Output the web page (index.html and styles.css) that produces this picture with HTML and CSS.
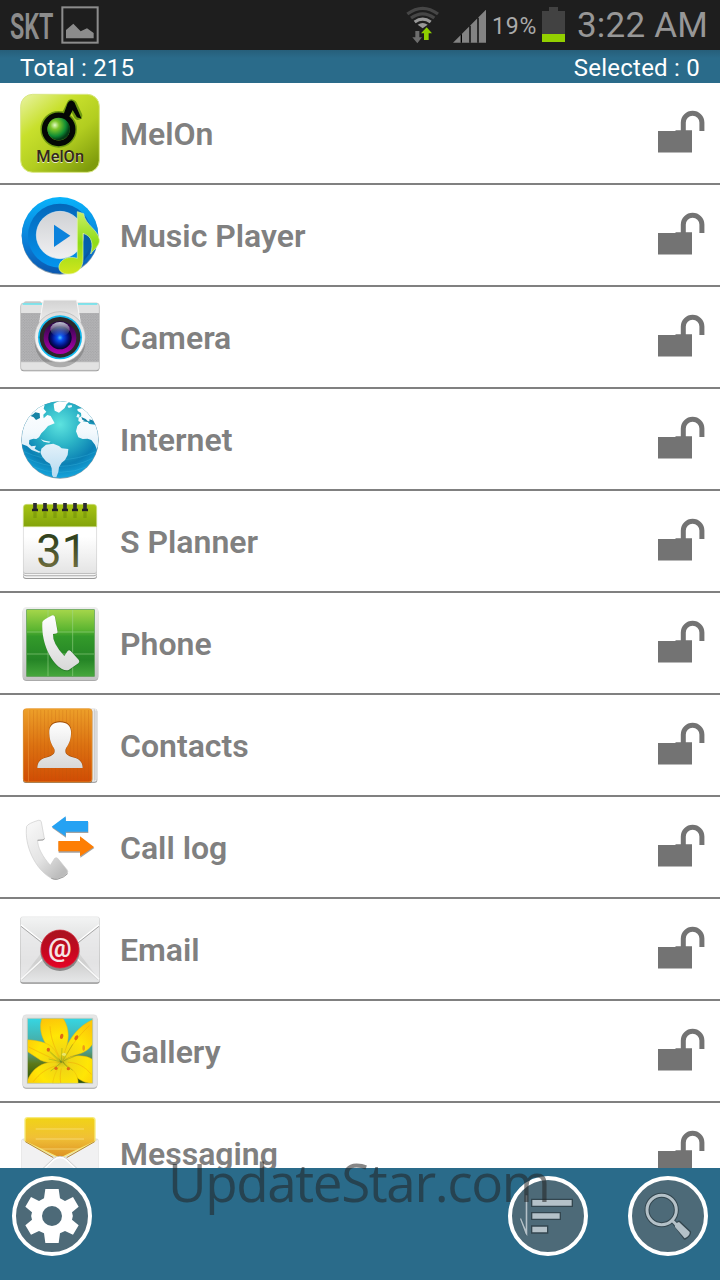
FILE: index.html
```html
<!DOCTYPE html>
<html lang="en">
<head>
    <meta charset="UTF-8">
    <meta name="viewport" content="width=device-width, initial-scale=1.0">
    <title>App Lock</title>
    <link rel="stylesheet" href="styles.css">
</head>
<body>
    <!-- Shared symbols -->
    <svg class="defs" width="0" height="0">
        <symbol id="lock" viewBox="0 0 48 44">
            <path d="M26.3 22V12.5a9.3 9.3 0 0 1 18.6 0V21" fill="none" stroke="#737373" stroke-width="5"/>
            <path d="M1 21h17.5v-.7H35V42.5H1z" fill="#737373"/>
        </symbol>
    </svg>

    <div class="screen">
        <div class="status-bar">
            <span class="carrier">SKT</span>
            <svg class="picture-icon" viewBox="183 18 114 114">
                <rect x="187" y="22" width="106" height="106" fill="none" stroke="#8c8c8c" stroke-width="6"/>
                <path d="M198 115V90l22-19 22 23 19-9 20 14v16z" fill="#8c8c8c"/>
            </svg>
            <svg class="wifi-icon" viewBox="137 18 102 114">
                <g fill="none" stroke-width="10">
                    <path d="M141 42q46-34 92 0" stroke="#464646"/>
                    <path d="M152 54q35-25 70 0" stroke="#464646"/>
                    <path d="M163 66q24-17 48 0" stroke="#999"/>
                </g>
                <path d="M172 74q15-10 30 0l-15 11z" fill="#999"/>
                <path d="M165 93h12v19h8l-14 18-15-18h9z" fill="#6d6d6d"/>
                <path d="M199 82l16 18h-10v20h-14v-20h-9z" fill="#8fd000"/>
            </svg>
            <svg class="signal-icon" viewBox="279 28 99 99">
                <path d="M279 126l99-99v99z" fill="#838383"/>
                <path d="M304 101v25M330 75v51M354 51v75" stroke="#000" stroke-width="4"/>
            </svg>
            <span class="percent">19%</span>
            <svg class="battery-icon" viewBox="546 21 69 105">
                <path d="M567 21h27v12h21v93h-69V33h21z" fill="#424242"/>
                <path d="M546 102h69v24h-69z" fill="#93d000"/>
            </svg>
            <span class="clock">3:22 AM</span>
        </div>

        <div class="summary">
            <span>Total : 215</span>
            <span>Selected : 0</span>
        </div>

        <ul class="app-list">
            <li class="app">
                <svg class="app-icon" viewBox="60 27 240 240">
                    <defs>
                        <linearGradient id="melBg" x1="0" y1="0" x2=".8" y2="1">
                            <stop offset="0" stop-color="#e9f3a4"/>
                            <stop offset=".35" stop-color="#c8e02c"/>
                            <stop offset=".65" stop-color="#b2cd20"/>
                            <stop offset="1" stop-color="#7f9c0c"/>
                        </linearGradient>
                        <radialGradient id="melBall" cx=".33" cy=".33" r=".65">
                            <stop offset="0" stop-color="#e4fbc4"/>
                            <stop offset=".3" stop-color="#7dc52a"/>
                            <stop offset=".75" stop-color="#0e8b33"/>
                            <stop offset="1" stop-color="#043d17"/>
                        </radialGradient>
                    </defs>
                    <rect x="62" y="31" width="236" height="234" rx="36" fill="url(#melBg)" stroke="#d9e783" stroke-width="3"/>
                    <g fill="none" stroke="#6f9a10" stroke-width="26" stroke-linecap="round" stroke-linejoin="round">
                        <circle cx="176" cy="136" r="42"/>
                        <path d="M197 94l17-35 4 2 16 34"/>
                    </g>
                    <circle cx="176" cy="136" r="42" fill="none" stroke="#050805" stroke-width="17"/>
                    <path d="M191 96l14-38q8-12 17-1l19 44-9-3-14-24-16 30z" fill="#050805" stroke="#050805" stroke-width="4"/>
                    <circle cx="176" cy="135" r="34" fill="url(#melBall)"/>
                    <text x="109" y="238" class="melon-text melon-glow" textLength="143" lengthAdjust="spacingAndGlyphs">MelOn</text>
                    <text x="109" y="235" class="melon-text" textLength="143" lengthAdjust="spacingAndGlyphs">MelOn</text>
                </svg>
                <span class="app-name">MelOn</span>
                <svg class="lock"><use href="#lock"/></svg>
            </li>
            <li class="app">
                <svg class="app-icon" viewBox="60 333 240 240">
                    <defs>
                        <linearGradient id="musOut" x1="0" y1="0" x2="0" y2="1">
                            <stop offset="0" stop-color="#08b3fb"/>
                            <stop offset=".6" stop-color="#0b7dd6"/>
                            <stop offset="1" stop-color="#0b57ae"/>
                        </linearGradient>
                        <linearGradient id="musIn" x1="0" y1="0" x2="0" y2="1">
                            <stop offset="0" stop-color="#0467ba"/>
                            <stop offset="1" stop-color="#0494ed"/>
                        </linearGradient>
                        <linearGradient id="musDisc" x1="0" y1="0" x2="0" y2="1">
                            <stop offset="0" stop-color="#cfd1d4"/>
                            <stop offset="1" stop-color="#f0f0f2"/>
                        </linearGradient>
                        <linearGradient id="musNote" x1="0" y1="0" x2="0" y2="1">
                            <stop offset="0" stop-color="#c9ef62"/>
                            <stop offset=".5" stop-color="#8fdc18"/>
                            <stop offset="1" stop-color="#d2e51c"/>
                        </linearGradient>
                    </defs>
                    <circle cx="180" cy="457" r="115" fill="#8aa0b0"/>
                    <circle cx="180" cy="454" r="115" fill="url(#musOut)"/>
                    <circle cx="180" cy="455" r="96" fill="url(#musIn)"/>
                    <circle cx="180" cy="453" r="71" fill="url(#musDisc)" stroke="#e9edf2" stroke-width="2"/>
                    <path d="M162 422l49 33-49 34z" fill="#0b82dc"/>
                    <path d="M250 448c28 8 28 35 18 62l-18 22z" fill="#064a8c" opacity=".6"/>
                    <path d="M232 383l19 6c4 34 43 47 47 78 2 18-16 28-26 43 9-31 4-54-23-62v77c0 30-20 46-45 45-32-1-34-28-15-42 13-10 29-9 43-5z" fill="url(#musNote)" stroke="#e2f6a0" stroke-width="2"/>
                </svg>
                <span class="app-name">Music Player</span>
                <svg class="lock"><use href="#lock"/></svg>
            </li>
            <li class="app">
                <svg class="app-icon" viewBox="60 27 240 240">
                    <defs>
                        <pattern id="camDots" width="8" height="8" patternUnits="userSpaceOnUse">
                            <rect width="8" height="8" fill="#b4b4b6"/>
                            <circle cx="2" cy="2" r="1.5" fill="#969698"/>
                            <circle cx="6" cy="6" r="1.5" fill="#969698"/>
                        </pattern>
                        <linearGradient id="camTop" x1="0" y1="0" x2="0" y2="1">
                            <stop offset="0" stop-color="#d2d2d2"/>
                            <stop offset="1" stop-color="#f5f5f5"/>
                        </linearGradient>
                        <linearGradient id="camRing" x1="0" y1="0" x2="0" y2="1">
                            <stop offset="0" stop-color="#dcdcdc"/>
                            <stop offset="1" stop-color="#fff"/>
                        </linearGradient>
                        <linearGradient id="camPurple" x1="0" y1="0" x2="0" y2="1">
                            <stop offset="0" stop-color="#260540"/>
                            <stop offset="1" stop-color="#b000b0"/>
                        </linearGradient>
                        <radialGradient id="camBlue">
                            <stop offset="0" stop-color="#4ac4ff"/>
                            <stop offset=".25" stop-color="#0a50f0"/>
                            <stop offset=".7" stop-color="#03107e"/>
                            <stop offset="1" stop-color="#030326"/>
                        </radialGradient>
                        <linearGradient id="camShine" x1="0" y1="0" x2="0" y2="1">
                            <stop offset="0" stop-color="#d4dde4" stop-opacity=".9"/>
                            <stop offset="1" stop-color="#8098b0" stop-opacity="0"/>
                        </linearGradient>
                    </defs>
                    <rect x="72" y="40" width="52" height="16" rx="5" fill="#c9cccc"/>
                    <rect x="62" y="48" width="236" height="202" rx="9" fill="#8f8f8f"/>
                    <rect x="62" y="45" width="236" height="202" rx="9" fill="#e2e2e2" stroke="#bdbdbd" stroke-width="2"/>
                    <path d="M68 48h58M234 48h58" stroke="#66e4ee" stroke-width="5"/>
                    <rect x="63" y="75" width="234" height="147" fill="url(#camDots)"/>
                    <path d="M63 222h234" stroke="#c8c8c8" stroke-width="2"/>
                    <path d="M130 36h100l14 85H116z" fill="url(#camTop)" stroke="#f8f8f8" stroke-width="3"/>
                    <circle cx="180" cy="162" r="76" fill="#606060" opacity=".4"/>
                    <circle cx="180" cy="147" r="76" fill="url(#camRing)" stroke="#b4b4b4" stroke-width="2"/>
                    <circle cx="180" cy="148" r="66" fill="#12b9ee"/>
                    <circle cx="180" cy="148" r="61" fill="#2c2729"/>
                    <circle cx="180" cy="149" r="49" fill="url(#camPurple)"/>
                    <circle cx="180" cy="149" r="35" fill="url(#camBlue)"/>
                    <ellipse cx="180" cy="124" rx="29" ry="22" fill="url(#camShine)"/>
                </svg>
                <span class="app-name">Camera</span>
                <svg class="lock"><use href="#lock"/></svg>
            </li>
            <li class="app">
                <svg class="app-icon" viewBox="60 333 240 240">
                    <defs>
                        <radialGradient id="sea" cx=".5" cy=".3" r=".7">
                            <stop offset="0" stop-color="#5de3df"/>
                            <stop offset=".4" stop-color="#2bb3c6"/>
                            <stop offset=".75" stop-color="#0b80b4"/>
                            <stop offset="1" stop-color="#14a4dc"/>
                        </radialGradient>
                        <linearGradient id="land" gradientUnits="userSpaceOnUse" x1="0" y1="340" x2="0" y2="570">
                            <stop offset="0" stop-color="#fff"/>
                            <stop offset=".4" stop-color="#f3f9fd"/>
                            <stop offset="1" stop-color="#b4daf0"/>
                        </linearGradient>
                        <clipPath id="globeClip"><circle cx="180" cy="455" r="115"/></clipPath>
                    </defs>
                    <circle cx="180" cy="456" r="116" fill="#7f9dac"/>
                    <circle cx="180" cy="455" r="115" fill="url(#sea)"/>
                    <g clip-path="url(#globeClip)">
                        <path d="M70 490q110 50 220 0M80 510q100 50 200 0M95 535q85 36 170 0" fill="none" stroke="#4cc7ea" stroke-width="3" opacity=".25"/>
                        <g fill="url(#land)">
                            <path d="M60 466l6-60 22-34 24-18 22-4-3 12 8 9-9 9 1 11 11-10 10 3 8 14 4 8-20 8-10 12-10 10-7 12-8 5-9-1-12 4-1 12 7 7 14-2-4 9 12 7 8 3-7 2-22-8-14-12z"/>
                            <path d="M124 482l14-12 22-3 17 7 8 7 20 2-2 18-8 15-10 8-8 14-2 14-6 16-9 0-4-7-1-20-5-14-12-7-11-14-5-10z"/>
                            <path d="M161 347l16-8 32 2-9 7-6 12-17 14-13-6-2-10z"/>
                            <path d="M228 430l4-16 11-12 18-2 7 8 25 3 6 48-8 26-6-15-11-14-11-4-15 1-13-5z"/>
                            <path d="M232 363l14-2 14-6 28 32 4 18-15-7-10 2-14-1-9 5-9-5 1-10 8-4-1-10-10-6z"/>
                        </g>
                        <path d="M106 373l13 3 1 14-12 6-7-8-9-4 9-7zM244 387l13 6 9 9-8-1-11-6zM268 394l14 4-2 7-11-3z" fill="#1684a6"/>
                        <path d="M202 353l13-2 1 6-10 3zM122 454l13 4 17 3-5 3-16-3zM233 377l6 4-2 8-8-2z" fill="#eaf8fd"/>
                    </g>
                </svg>
                <span class="app-name">Internet</span>
                <svg class="lock"><use href="#lock"/></svg>
            </li>
            <li class="app">
                <svg class="app-icon" viewBox="60 27 240 240">
                    <defs>
                        <linearGradient id="calTop" x1="0" y1="0" x2="0" y2="1">
                            <stop offset="0" stop-color="#a6c413"/>
                            <stop offset="1" stop-color="#83a30b"/>
                        </linearGradient>
                        <linearGradient id="calPage" x1="0" y1="0" x2="0" y2="1">
                            <stop offset=".4" stop-color="#fff"/>
                            <stop offset="1" stop-color="#e4e4e4"/>
                        </linearGradient>
                        <linearGradient id="calNum" x1="0" y1="0" x2="0" y2="1">
                            <stop offset=".3" stop-color="#33431f"/>
                            <stop offset=".9" stop-color="#777343"/>
                        </linearGradient>
                    </defs>
                    <rect x="69" y="90" width="222" height="171" rx="9" fill="#999"/>
                    <rect x="70" y="90" width="220" height="168" rx="9" fill="#f5f5f5"/>
                    <rect x="70" y="90" width="220" height="163" rx="9" fill="#aaa"/>
                    <rect x="70" y="90" width="220" height="160" rx="9" fill="#f5f5f5"/>
                    <rect x="70" y="90" width="220" height="156" rx="9" fill="#a5a5a5"/>
                    <rect x="70" y="60" width="220" height="184" rx="9" fill="url(#calPage)" stroke="#d9d9d9"/>
                    <path d="M70 104V47q0-10 10-10h200q10 0 10 10v57z" fill="url(#calTop)" stroke="#cfdd83" stroke-width="2"/>
                    <path d="M105 60v18M135 60v18M165 60v18M195 60v18M225 60v18M255 60v18" stroke="#6f8c0a" stroke-width="10" opacity=".5"/>
                    <path d="M105 33v22M135 33v22M165 33v22M195 33v22M225 33v22M255 33v22" stroke="#2c2c31" stroke-width="11"/>
                    <path d="M96 54h18M126 54h18M156 54h18M186 54h18M216 54h18M246 54h18" stroke="#222226" stroke-width="7"/>
                    <text x="109" y="225" class="calendar-text" fill="url(#calNum)" textLength="152" lengthAdjust="spacingAndGlyphs">31</text>
                </svg>
                <span class="app-name">S Planner</span>
                <svg class="lock"><use href="#lock"/></svg>
            </li>
            <li class="app">
                <svg class="app-icon" viewBox="60 333 240 240">
                    <defs>
                        <linearGradient id="phBg" x1="0" y1="0" x2="0" y2="1">
                            <stop offset="0" stop-color="#a5d64a"/>
                            <stop offset=".3" stop-color="#5cb531"/>
                            <stop offset=".4" stop-color="#339a2a"/>
                            <stop offset=".75" stop-color="#258526"/>
                            <stop offset="1" stop-color="#46a73c"/>
                        </linearGradient>
                        <linearGradient id="frame" x1="0" y1="0" x2="0" y2="1">
                            <stop offset="0" stop-color="#eee"/>
                            <stop offset="1" stop-color="#c4c4c4"/>
                        </linearGradient>
                        <linearGradient id="handset" x1="0" y1="0" x2="0" y2="1">
                            <stop offset="0" stop-color="#fff"/>
                            <stop offset="1" stop-color="#d8d8d8"/>
                        </linearGradient>
                    </defs>
                    <rect x="68" y="348" width="227" height="219" rx="12" fill="#aaa"/>
                    <rect x="68" y="345" width="227" height="219" rx="12" fill="url(#frame)"/>
                    <rect x="80" y="353" width="203" height="200" fill="url(#phBg)" stroke="#4e9745" stroke-width="2"/>
                    <path d="M144 354v198M218 354v198M81 420h201M81 486h201" stroke="#a1d891" stroke-width="2.5" opacity=".65"/>
                    <path d="M128 392q4-8 30-22 6-2 8 5l8 46q-2 5-14 7-2 26 34 66l10-19q4-4 9 0l24 28q4 4 0 10l-30 24q-9 3-20-3c-28-16-63-70-59-142z" fill="#0e4f14" opacity=".4"/>
                    <path d="M127 390q4-8 30-20 6-2 8 5l8 46q-2 5-14 5-2 28 34 66l10-15q4-4 9 0l24 26q4 4 0 10l-30 21q-9 3-20-3c-28-16-63-70-59-141z" fill="url(#handset)"/>
                </svg>
                <span class="app-name">Phone</span>
                <svg class="lock"><use href="#lock"/></svg>
            </li>
            <li class="app">
                <svg class="app-icon" viewBox="60 27 240 240">
                    <defs>
                        <linearGradient id="conBg" x1="0" y1="0" x2="0" y2="1">
                            <stop offset="0" stop-color="#eda02a"/>
                            <stop offset=".5" stop-color="#dc7211"/>
                            <stop offset="1" stop-color="#d04c04"/>
                        </linearGradient>
                        <pattern id="grain" width="11" height="10" patternUnits="userSpaceOnUse">
                            <rect width="2" height="10" fill="#b75005" opacity=".3"/>
                        </pattern>
                    </defs>
                    <rect x="80" y="38" width="212" height="223" rx="9" fill="#a5a5a5"/>
                    <rect x="80" y="37" width="211" height="220" rx="9" fill="#ededed"/>
                    <path d="M283 40v214M288 44v208" stroke="#b3b3b3" stroke-width="2"/>
                    <rect x="69" y="39" width="208" height="222" rx="9" fill="#8b7563"/>
                    <rect x="70" y="38" width="206" height="220" rx="9" fill="url(#conBg)" stroke="#ee9a2e" stroke-width="2"/>
                    <rect x="88" y="42" width="182" height="212" fill="url(#grain)"/>
                    <path d="M85 40v216" stroke="#f1a64b" stroke-width="2" opacity=".7"/>
                    <path d="M180 76c24 0 36 14 34 36-1 23-10 35-16 46-4 14 4 19 20 24 22 5 31 17 31 33H111c0-16 9-28 31-33 16-5 24-10 20-24-6-11-14-23-15-46-2-22 9-36 33-36z" fill="#9e4a05"/>
                    <path d="M180 79c24 0 35 14 33 35-1 23-10 34-16 45-4 14 5 20 21 25 22 5 30 16 30 32H112c0-16 8-27 30-32 16-5 25-11 21-25-6-11-14-22-15-45-2-21 8-35 32-35z" fill="url(#handset)"/>
                </svg>
                <span class="app-name">Contacts</span>
                <svg class="lock"><use href="#lock"/></svg>
            </li>
            <li class="app">
                <svg class="app-icon" viewBox="60 333 240 240">
                    <defs>
                        <linearGradient id="callSet" x1="0" y1="0" x2=".7" y2="1">
                            <stop offset="0" stop-color="#fafafa"/>
                            <stop offset=".6" stop-color="#e4e4e4"/>
                            <stop offset="1" stop-color="#bcbcbc"/>
                        </linearGradient>
                    </defs>
                    <path d="M80 391q5-9 35-18 8-2 9 5l9 49-4 4-16 1c-1 21 14 49 38 76l13-21q5-4 9 0l28 34q4 5 1 11-9 11-30 17-9 3-18-2c-50-28-82-101-74-156z" fill="url(#callSet)" stroke="#ccc" stroke-width="2"/>
                    <path d="M134 428l-5 4-16 1M203 533q-9 11-31 17-9 1-18-3" fill="none" stroke="#8f8f8f" stroke-width="2.5"/>
                    <g opacity=".45" transform="translate(1 3)">
                        <path d="M155 392l42-31v14h67v33h-67v14z" fill="#333"/>
                        <path d="M282 453l-42-32v14h-65v32h65v15z" fill="#333"/>
                    </g>
                    <path d="M155 392l42-31v14h67v32h-67v14z" fill="#25a2f3"/>
                    <path d="M282 453l-42-32v14h-65v31h65v15z" fill="#fd7e04"/>
                </svg>
                <span class="app-name">Call log</span>
                <svg class="lock"><use href="#lock"/></svg>
            </li>
            <li class="app">
                <svg class="app-icon" viewBox="60 27 240 240">
                    <defs>
                        <linearGradient id="env" x1="0" y1="0" x2="0" y2="1">
                            <stop offset="0" stop-color="#f3f4f4"/>
                            <stop offset=".7" stop-color="#cfcfcf"/>
                            <stop offset="1" stop-color="#e6e7e8"/>
                        </linearGradient>
                        <linearGradient id="seal" x1="0" y1="0" x2="0" y2="1">
                            <stop offset="0" stop-color="#a81420"/>
                            <stop offset=".55" stop-color="#c4081f"/>
                            <stop offset="1" stop-color="#e60326"/>
                        </linearGradient>
                    </defs>
                    <rect x="61" y="52" width="238" height="199" rx="8" fill="#8e8e8e"/>
                    <rect x="61" y="50" width="238" height="197" rx="8" fill="url(#env)" stroke="#d6d6d6"/>
                    <path d="M63 78l75 62-75 98zM297 78l-75 62 75 98z" fill="#ebebec" opacity=".7"/>
                    <path d="M63 74l75 60M297 74l-75 60" stroke="#fff" stroke-width="4"/>
                    <path d="M63 79l75 59M297 79l-75 59" stroke="#9a9a9a" stroke-width="2.5"/>
                    <path d="M63 238l75-70M297 238l-75-70" stroke="#fafafa" stroke-width="4"/>
                    <path d="M66 240l75-69M294 240l-75-69" stroke="#cdcdcd" stroke-width="2"/>
                    <circle cx="180" cy="154" r="59" fill="#555" opacity=".6"/>
                    <circle cx="180" cy="147" r="57" fill="url(#seal)" stroke="#d62539" stroke-width="2"/>
                    <text x="180" y="170" class="at-text" text-anchor="middle">@</text>
                </svg>
                <span class="app-name">Email</span>
                <svg class="lock"><use href="#lock"/></svg>
            </li>
            <li class="app">
                <svg class="app-icon" viewBox="0 0 240 240">
                    <defs>
                        <linearGradient id="galBg" x1="0" y1="0" x2="0" y2="1">
                            <stop offset="0" stop-color="#36d6e3"/>
                            <stop offset=".5" stop-color="#4d9e91"/>
                            <stop offset=".7" stop-color="#5c7818"/>
                            <stop offset="1" stop-color="#28500a"/>
                        </linearGradient>
                        <radialGradient id="petal" gradientUnits="userSpaceOnUse" cx="126" cy="150" r="130">
                            <stop offset="0" stop-color="#b9bb20"/>
                            <stop offset=".16" stop-color="#efd515"/>
                            <stop offset=".6" stop-color="#ffe605"/>
                            <stop offset="1" stop-color="#fdc808"/>
                        </radialGradient>
                        <clipPath id="galClip"><path d="M22 22h196v195H22z"/></clipPath>
                    </defs>
                    <rect x="8" y="14" width="224" height="219" rx="11" fill="#a0a0a0"/>
                    <rect x="8" y="11" width="224" height="219" rx="11" fill="#e5e6e6" stroke="#d2d2d2"/>
                    <g clip-path="url(#galClip)">
                        <path d="M22 22h196v195H22z" fill="url(#galBg)"/>
                        <g fill="url(#petal)" stroke="#edb80c" stroke-width="1.5">
                            <path d="M128 152c2-25 10-48 24-68 17-27 40-47 70-60v66c-6 18-24 34-48 40-22 5-34 12-46 22z"/>
                            <path d="M124 150c-30-28-66-60-62-112l4-18h62c14 20 20 45 15 72-4 23-14 38-15 58z"/>
                            <path d="M120 154c-20 4-38 2-58-6l-42-28V86c26 2 49 5 66 15 20 12 28 32 34 53z"/>
                            <path d="M124 156c-40-10-86 6-104 58v8h98c-6-22-4-42 6-66z"/>
                            <path d="M130 152c18-18 44-20 64-16 12 2 20 7 30 13v68c-22 2-45-7-60-24z"/>
                            <path d="M126 154c-14 18-26 40-28 66h76c2-24-8-44-48-66z"/>
                        </g>
                        <path d="M118 138c-16-32-26-58-28-92M140 132c14-28 34-56 68-88M108 148C84 136 58 124 26 108M110 164c-30 8-52 24-70 48M144 154c28 0 52 14 70 36M124 172c-4 18-4 30-2 44" fill="none" stroke="#f2ad0b" stroke-width="3" opacity=".6"/>
                        <path d="M124 153l2-42M128 150l30-50M122 150l-34-30M124 154l-18 15M128 154l16 17M130 150l48-20M122 152l-36-8M118 160l-26 20M114 148l-24-24M132 158l26 20" stroke="#86a11b" stroke-width="2" opacity=".7"/>
                        <g fill="#df6a16">
                            <ellipse cx="125" cy="76" rx="5" ry="8" transform="rotate(15 125 76)"/>
                            <ellipse cx="169" cy="80" rx="5" ry="8" transform="rotate(30 169 80)"/>
                            <ellipse cx="85" cy="116" rx="5" ry="6"/>
                            <ellipse cx="191" cy="111" rx="4" ry="9" fill="#f09b18"/>
                            <ellipse cx="108" cy="172" rx="5" ry="5"/>
                            <ellipse cx="145" cy="173" rx="5" ry="5"/>
                        </g>
                        <ellipse cx="132" cy="130" rx="6" ry="5" fill="#e9e66a"/>
                    </g>
                    <path d="M22 22h196v195H22z" fill="none" stroke="#b9c4b4" stroke-width="2"/>
                </svg>
                <span class="app-name">Gallery</span>
                <svg class="lock"><use href="#lock"/></svg>
            </li>
            <li class="app">
                <svg class="app-icon" viewBox="60 37 240 240">
                    <defs>
                        <linearGradient id="msgCard" x1="0" y1="0" x2="0" y2="1">
                            <stop offset="0" stop-color="#f1d316"/>
                            <stop offset=".5" stop-color="#f0c036"/>
                            <stop offset="1" stop-color="#dc8e22"/>
                        </linearGradient>
                    </defs>
                    <path d="M64 118q4-4 10-5h212q8 1 10 5v160H64z" fill="#dfdfdf"/>
                    <path d="M75 58q0-7 8-7h194q8 0 8 7v65l-105 50-105-50z" fill="url(#msgCard)" stroke="#f7ea7c" stroke-width="4"/>
                    <path d="M107 85h145M107 115h145M107 145h145" stroke="#fae78b" stroke-width="2.5" opacity=".8"/>
                    <path d="M66 117l92 54q22-6 44 0l92-54v164H66z" fill="#f1f1f2"/>
                    <path d="M76 123l84 48M284 123l-84 48" stroke="#b88b32" stroke-width="3"/>
                    <path d="M120 212l40-38q20-14 40 0l40 38" fill="#eeeff0" stroke="#bbb" stroke-width="2"/>
                    <path d="M122 215l40-38q18-13 36 0l40 38" fill="#eeeff0" stroke="#fff" stroke-width="4"/>
                </svg>
                <span class="app-name">Messaging</span>
                <svg class="lock"><use href="#lock"/></svg>
            </li>
        </ul>

        <div class="toolbar">
            <button class="round-btn" aria-label="Settings">
                <svg viewBox="48 240 216 216">
                    <path fill="#fff" fill-rule="evenodd" d="M136 267h40l4 28 15 8 24-12 17 29-20 17q5 11 0 22l20 17-17 28-24-11-15 7-4 29h-40l-4-29-15-7-24 11-17-28 20-17q-5-11 0-22l-20-17 17-29 24 12 15-8zM156 318a30 30 0 1 0 0 60a30 30 0 1 0 0-60z"/>
                </svg>
            </button>
            <button class="round-btn sort" aria-label="Sort">
                <svg viewBox="456 240 216 216">
                    <g fill="#b4c1c8" stroke="#33464f" stroke-width="4">
                        <path d="M515 298h122v21H515zM515 338h86v20h-86zM515 378h48v21h-48z"/>
                    </g>
                    <path d="M500 283v122l-18-49" fill="none" stroke="#2f434d" stroke-width="8" opacity=".2"/>
                    <path d="M497 286h5v122l-5-6-17-45 3-3 14 34z" fill="#b4c1c8"/>
                </svg>
            </button>
            <button class="round-btn" aria-label="Search">
                <svg viewBox="816 240 216 216">
                    <g stroke="#33464f" fill="none">
                        <circle cx="905" cy="330" r="44" stroke-width="15"/>
                        <path d="M935 360l15 15" stroke-width="14"/>
                        <path d="M943 374l14-9 33 31q0 12-16 20z" stroke-width="7" stroke-linejoin="round"/>
                    </g>
                    <g stroke="#b4c1c8" fill="none">
                        <circle cx="905" cy="330" r="44" stroke-width="9"/>
                        <path d="M935 360l15 15" stroke-width="9"/>
                        <path d="M944 371l13-5 32 30q1 12-15 19l-29-34z" fill="#b4c1c8" stroke="none"/>
                    </g>
                </svg>
            </button>
        </div>

        <div class="watermark">UpdateStar.com</div>
    </div>
</body>
</html>
```
FILE: styles.css
```css
* {
    box-sizing: border-box;
}

body {
    margin: 0;
    font-family: Roboto, "Liberation Sans", sans-serif;
}

.defs {
    position: absolute;
}

.screen {
    position: relative;
    display: flex;
    flex-direction: column;
    width: 720px;
    height: 1280px;
    overflow: hidden;
    background: #fff;
}

.status-bar {
    display: flex;
    align-items: center;
    flex: none;
    height: 50px;
    padding: 0 13px 0 10px;
    background: #1e1e1e;
    color: #979797;
    white-space: nowrap;
}

.carrier {
    width: 51px;
    padding-top: 3px;
    font-size: 36px;
    font-weight: 600;
    line-height: 50px;
    color: #8c8c8c;
    transform: scaleX(0.65);
    transform-origin: left;
}

.picture-icon {
    width: 38px;
    height: 38px;
}

.wifi-icon {
    width: 34px;
    height: 38px;
    margin-left: auto;
}

.signal-icon {
    width: 33px;
    height: 33px;
    margin: 3px 6px 0 13px;
}

.percent {
    width: 50px;
    padding-top: 2px;
    font-size: 23px;
    letter-spacing: 0.8px;
    color: #aaa;
}

.battery-icon {
    width: 23px;
    height: 35px;
    margin-bottom: 1px;
}

.clock {
    width: 130px;
    margin-left: 12px;
    font-size: 35px;
    letter-spacing: 0.2px;
}

.summary {
    display: flex;
    justify-content: space-between;
    flex: none;
    height: 33px;
    padding: 0 20px;
    background: linear-gradient(#265f7a, #2a6b8a 8px);
    color: #fff;
    font-size: 24px;
    line-height: 36px;
    letter-spacing: 0.23px;
}

.app-list {
    flex: 1;
    min-height: 0;
    margin: 0;
    padding: 0;
    overflow: hidden;
    list-style: none;
}

.app {
    display: flex;
    align-items: center;
    height: 102px;
    padding: 0 15px 0 20px;
    border-bottom: 2px solid #808080;
}

.app-icon {
    width: 80px;
    height: 80px;
}

.app-name {
    flex: 1;
    margin-left: 20px;
    padding-top: 2px;
    font-size: 32px;
    font-weight: 600;
    color: #808080;
}

.lock {
    width: 48px;
    height: 44px;
    margin-bottom: 2px;
}

.melon-text {
    font-size: 50px;
    font-weight: 500;
    fill: #33281a;
}

.melon-glow {
    fill: #e8edc8;
}

.calendar-text {
    font-size: 141px;
}

.at-text {
    font-size: 78px;
    font-weight: 700;
    fill: #f5e4e5;
}

.toolbar {
    display: flex;
    gap: 40px;
    flex: none;
    height: 112px;
    padding: 8px 12px;
    background: #2a6b8a;
}

.round-btn {
    width: 80px;
    height: 80px;
    padding: 0;
    border: 4px solid #fff;
    border-radius: 50%;
    background: #4d6a78;
}

.round-btn svg {
    display: block;
    width: 72px;
    height: 72px;
}

.sort {
    margin-left: auto;
}

.watermark {
    position: absolute;
    left: 168px;
    top: 1146px;
    font-family: "Open Sans", "Noto Sans", sans-serif;
    font-size: 53px;
    line-height: 72px;
    letter-spacing: -1.4px;
    color: rgba(34, 34, 34, 0.55);
    white-space: nowrap;
}
```
